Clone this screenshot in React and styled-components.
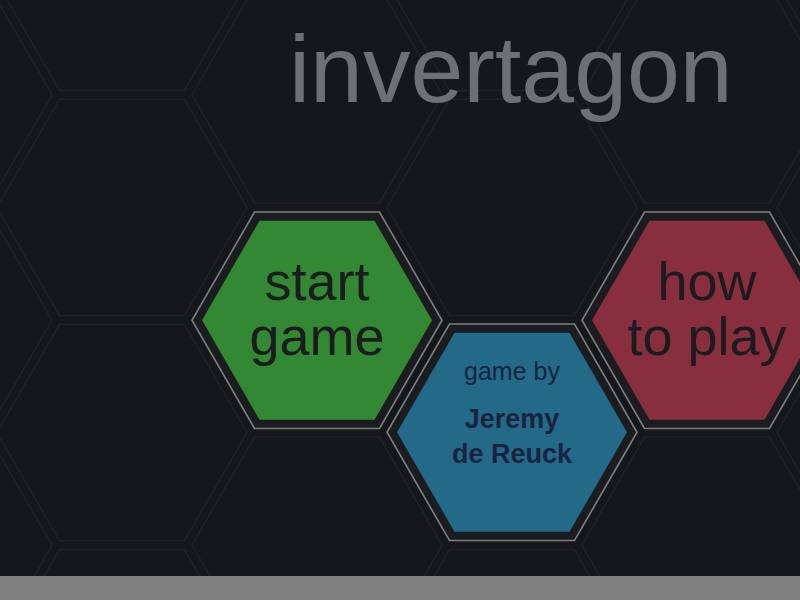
import React from 'react';
import styled, { createGlobalStyle } from 'styled-components';

const GlobalStyle = createGlobalStyle`
  html, body { margin: 0; padding: 0; background: #16171b; }
  body { font-family: "Liberation Sans", Arial, sans-serif; }
`;

// hex grid geometry (flat-top)
const R = 125;        // outline radius of one cell
const STEP = 130;     // spacing radius between cell centres
const ORIGIN = { x: 317, y: 320 };
const ROW = Math.sqrt(3) * STEP;

const cellCentre = (col, row) => ({
  x: ORIGIN.x + 1.5 * STEP * col,
  y: ORIGIN.y + ROW * row + (Math.abs(col) % 2 === 1 ? ROW / 2 : 0),
});

const hexPoints = (cx, cy, r) =>
  [0, 60, 120, 180, 240, 300]
    .map((a) => {
      const t = (a * Math.PI) / 180;
      return `${(cx + r * Math.cos(t)).toFixed(2)},${(cy + r * Math.sin(t)).toFixed(2)}`;
    })
    .join(' ');

const Page = styled.div`
  width: 800px;
  height: 600px;
  display: flex;
  flex-direction: column;
  overflow: hidden;
`;

const Board = styled.main`
  position: relative;
  flex: 1;
  overflow: hidden;
`;

const Grid = styled.svg`
  position: absolute;
  inset: 0;
  width: 100%;
  height: 100%;
`;

const Title = styled.h1`
  position: relative;
  margin: 0;
  padding: 22px 0 0 289px;
  font-size: 95px;
  line-height: 95px;
  font-weight: 400;
  color: #6e7173;
`;

const Tile = styled.button`
  position: absolute;
  width: ${2 * R + 4}px;
  height: ${Math.sqrt(3) * R + 4}px;
  padding: 0;
  border: 0;
  background: none;
  display: grid;
  cursor: pointer;
  font-family: inherit;

  & > * { grid-area: 1 / 1; }
`;

const TileShape = styled.svg`
  width: 100%;
  height: 100%;
`;

const Label = styled.div`
  display: flex;
  flex-direction: column;
  align-items: center;
  padding-top: ${(p) => p.$top}px;
  color: ${(p) => p.$ink};
`;

const BigLine = styled.span`
  font-size: 54px;
  line-height: 55px;
`;

const SmallLine = styled.span`
  font-size: 25px;
  line-height: 30px;
  margin-bottom: 16px;
`;

const NameLine = styled.span`
  font-size: 27px;
  line-height: 35px;
  font-weight: 700;
`;

const Footer = styled.footer`
  height: 24px;
  background: #808080;
`;

const HexTile = ({ col, row, fill, children }) => {
  const c = cellCentre(col, row);
  const w = 2 * R + 4;
  const h = Math.sqrt(3) * R + 4;
  const mx = w / 2;
  const my = h / 2;
  return (
    <Tile style={{ left: c.x - mx, top: c.y - my }}>
      <TileShape viewBox={`0 0 ${w} ${h}`}>
        <polygon points={hexPoints(mx, my, R)} fill="#1b1c1f" stroke="#7d7e80" strokeWidth="1.6" />
        <polygon points={hexPoints(mx, my, 115)} fill={fill} />
      </TileShape>
      {children}
    </Tile>
  );
};

const cells = [];
for (let col = -3; col <= 3; col++) {
  for (let row = -2; row <= 2; row++) cells.push(cellCentre(col, row));
}

export default function App() {
  return (
    <Page>
      <GlobalStyle />
      <Board>
        <Grid>
          {cells.map((c, i) => (
            <polygon key={i} points={hexPoints(c.x, c.y, R)} fill="none" stroke="#212226" strokeWidth="1.5" />
          ))}
        </Grid>
        <Title>invertagon</Title>

        <HexTile col={0} row={0} fill="#338833">
          <Label $top={44} $ink="#1b1c1d">
            <BigLine>start</BigLine>
            <BigLine>game</BigLine>
          </Label>
        </HexTile>

        <HexTile col={1} row={0} fill="#226a88">
          <Label $top={34} $ink="#1a2340">
            <SmallLine>game by</SmallLine>
            <NameLine>Jeremy</NameLine>
            <NameLine>de Reuck</NameLine>
          </Label>
        </HexTile>

        <HexTile col={2} row={0} fill="#882e3e">
          <Label $top={44} $ink="#1b1c1d">
            <BigLine>how</BigLine>
            <BigLine>to play</BigLine>
          </Label>
        </HexTile>
      </Board>
      <Footer />
    </Page>
  );
}
